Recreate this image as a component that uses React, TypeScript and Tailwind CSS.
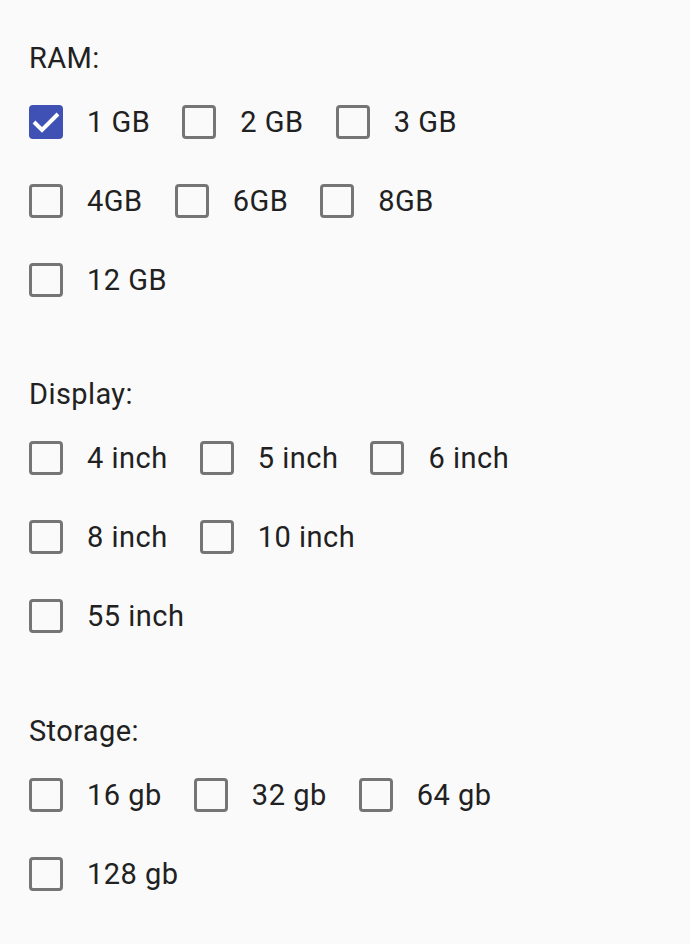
const groups = [
  { title: 'RAM:', rows: [['1 GB', '2 GB', '3 GB'], ['4GB', '6GB', '8GB'], ['12 GB']] },
  { title: 'Display:', rows: [['4 inch', '5 inch', '6 inch'], ['8 inch', '10 inch'], ['55 inch']] },
  { title: 'Storage:', rows: [['16 gb', '32 gb', '64 gb'], ['128 gb']] },
]

function Box({ checked }: { checked: boolean }) {
  if (checked) {
    return (
      <span className="w-[34px] h-[34px] rounded-[4px] bg-[#3f51b5] flex shrink-0">
        <svg width="34" height="34" viewBox="0 0 34 34" fill="none">
          <path d="M5 17l8 8L29 9" stroke="white" strokeWidth="4" />
        </svg>
      </span>
    )
  }
  return <span className="w-[34px] h-[34px] rounded-[4px] border-[3px] border-[#757575] shrink-0" />
}

export default function App() {
  return (
    <div
      className="min-h-[944px] w-[690px] bg-[#fafafa] px-[29px] pt-[42px] text-[#212121]"
      style={{ fontFamily: 'Roboto, "Noto Sans", sans-serif' }}
    >
      {groups.map((g, gi) => (
        <div key={g.title} className={gi === 1 ? 'mt-[59px]' : gi === 2 ? 'mt-[60px]' : ''}>
          <div className="h-[32px] leading-[32px] text-[29px] tracking-[0.4px] mb-2">{g.title}</div>
          {g.rows.map((row, ri) => (
            <div key={ri} className="h-[79px] flex items-center gap-[32px]">
              {row.map(label => (
                <label key={label} className="flex items-center gap-[24px]">
                  <Box checked={label === '1 GB'} />
                  <span className="text-[29px] leading-[32px] tracking-[0.5px]">{label}</span>
                </label>
              ))}
            </div>
          ))}
        </div>
      ))}
    </div>
  )
}
